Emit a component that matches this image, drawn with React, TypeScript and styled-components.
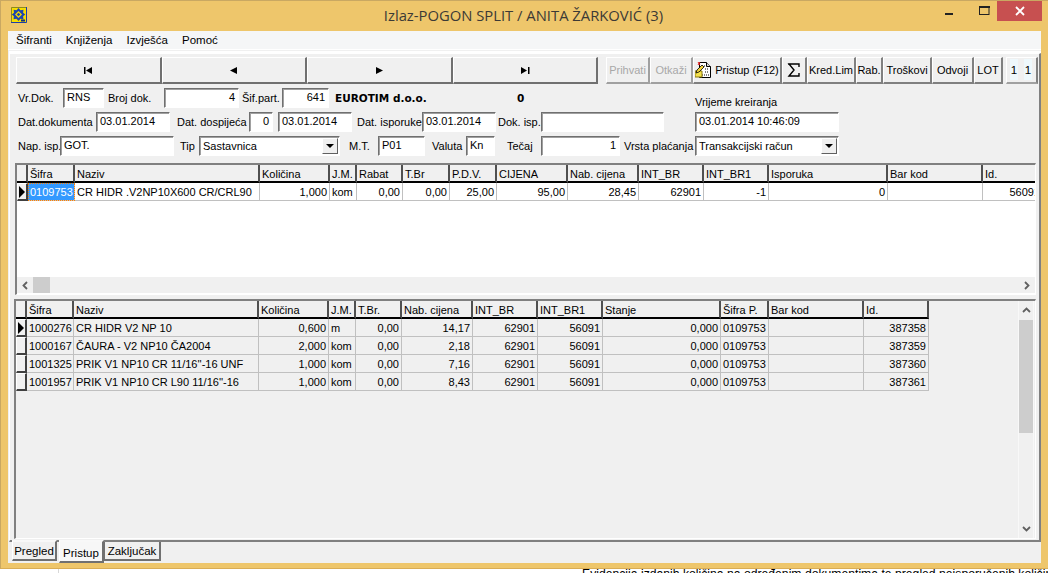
import React from 'react';
import styled, { createGlobalStyle } from 'styled-components';

const GlobalStyle = createGlobalStyle`
  html, body { margin: 0; padding: 0; background: #fff; overflow: hidden; }
  body { width: 1048px; height: 573px; font-family: "Liberation Sans", Arial, sans-serif; font-size: 11px; color: #000; }
  * { box-sizing: border-box; }
`;

const Page = styled.div`
  width: 1048px;
  height: 573px;
  position: relative;
  overflow: hidden;
  background: #fff;
`;
const BehindText = styled.div`
  position: absolute;
  left: 582px;
  top: 567px;
  font-size: 12.2px;
  white-space: nowrap;
`;
const BehindLine = styled.div`
  position: absolute;
  left: 58px;
  top: 569px;
  width: 1px;
  height: 4px;
  background: #d8d8d8;
`;
const Window = styled.div`
  width: 1048px;
  height: 569px;
  display: flex;
  flex-direction: column;
  background: #eec66b;
  border: 1px solid #d9ad55;
  border-top-color: #c9a862;
  border-left-color: #c9a862;
  border-right: 0;
  padding: 0 6px 5px 7px;
  position: relative;
`;
const TitleBar = styled.div`
  height: 30px;
  flex: none;
  display: flex;
  align-items: center;
  padding: 0 0 2px 3px;
`;
const Title = styled.div`
  flex: 1;
  text-align: center;
  font-family: "Open Sans", "Noto Sans", sans-serif;
  font-size: 14.8px;
  color: #3c3a36;
  padding-left: 94px;
`;
const WinButtons = styled.div`
  display: flex;
  align-self: flex-start;
  align-items: flex-start;
`;
const WinButton = styled.div<{ $w: number; $bg?: string }>`
  width: ${p => p.$w}px;
  height: 20px;
  background: ${p => p.$bg || 'transparent'};
  display: flex;
  align-items: center;
  justify-content: center;
`;
const Client = styled.div`
  flex: 1;
  display: flex;
  flex-direction: column;
  margin-right: 1px;
  background: #f0f0f0;
  min-height: 0;
`;
const MenuBar = styled.div`
  height: 19px;
  flex: none;
  display: flex;
  align-items: center;
  gap: 14px;
  padding-left: 8px;
  background: #f5f6f7;
  font-size: 11.5px;
  border-bottom: 1px solid #fff;
`;
const Sheet = styled.div`
  flex: 1;
  display: flex;
  flex-direction: column;
  margin: 1px 0 0 1px;
  min-height: 0;
  border-top: 2px solid #fff;
`;
const Main = styled.div`
  height: 489px;
  flex: none;
  border: 1px solid #fff;
  border-right: 2px solid #808080;
  border-bottom: 2px solid #808080;
  padding: 3px 1px 0 6px;
  display: flex;
  flex-direction: column;
`;
const ToolRow = styled.div`
  display: flex;
  height: 27px;
  flex: none;
`;
const NavButton = styled.div`
  width: 145.5px;
  height: 27px;
  background: #f0f0f0;
  border: 1px solid #fff;
  border-right: 2px solid #707070;
  border-bottom: 2px solid #707070;
  display: flex;
  align-items: center;
  justify-content: center;
`;
const ToolGroup = styled.div`
  display: flex;
  margin-left: 8px;
  flex: 1;
`;
const ToolButton = styled.div<{ $w: number; $off?: boolean }>`
  width: ${p => p.$w}px;
  height: 27px;
  flex: none;
  background: #f0f0f0;
  border: 1px solid #fff;
  border-right: 2px solid ${p => (p.$off ? '#a0a0a0' : '#808080')};
  border-bottom: 2px solid ${p => (p.$off ? '#a0a0a0' : '#808080')};
  display: flex;
  align-items: center;
  justify-content: center;
  gap: 3px;
  white-space: nowrap;
  color: ${p => (p.$off ? '#a8a8a8' : '#000')};
  font-size: 11px;
  overflow: hidden;
`;
const CounterBox = styled.div`
  flex: 1;
  height: 27px;
  display: flex;
  margin-left: 3px;
  border-left: 1px solid #fff;
  border-top: 1px solid #fff;
  border-right: 2px solid #808080;
  border-bottom: 2px solid #a0a0a0;
`;
const Counter = styled.div<{ $ml: number }>`
  width: 8px;
  height: 21px;
  margin: 1px 0 0 ${p => p.$ml}px;
  background: #eef8fc;
  display: flex;
  align-items: center;
  justify-content: center;
  font-size: 11.5px;
`;
const FormArea = styled.div`
  height: 79px;
  flex: none;
  display: flex;
  flex-direction: column;
  padding-top: 4px;
`;
const FormRow = styled.div`
  height: 24px;
  flex: none;
  display: flex;
  align-items: flex-start;
`;
const Label = styled.div<{ $ml: number; $w?: number }>`
  margin-left: ${p => p.$ml}px;
  ${p => (p.$w ? `width: ${p.$w}px;` : '')}
  flex: none;
  line-height: 20px;
  font-size: 11px;
  white-space: nowrap;
`;
const Strong = styled.div<{ $ml: number; $w: number }>`
  margin-left: ${p => p.$ml}px;
  width: ${p => p.$w}px;
  flex: none;
  line-height: 20px;
  font-family: "DejaVu Sans", sans-serif;
  font-size: 10.5px;
  font-weight: bold;
  white-space: nowrap;
`;
const Input = styled.div<{ $ml: number; $w: number; $right?: boolean }>`
  margin-left: ${p => p.$ml}px;
  width: ${p => p.$w}px;
  height: 20px;
  flex: none;
  background: #fff;
  border: 1px solid #fff;
  border-top-color: #707070;
  border-left-color: #707070;
  box-shadow: inset 1px 1px 0 #a0a0a0;
  padding: 0 3px 0 3px;
  line-height: 17px;
  font-size: 11px;
  text-align: ${p => (p.$right ? 'right' : 'left')};
  overflow: hidden;
  white-space: nowrap;
`;
const Select = styled(Input)`
  display: flex;
  align-items: center;
  justify-content: space-between;
  padding-right: 1px;
`;
const SelectArrow = styled.div`
  width: 16px;
  height: 16px;
  flex: none;
  background: #f0f0f0;
  border: 1px solid #fff;
  border-right-color: #606060;
  border-bottom-color: #606060;
  display: flex;
  align-items: center;
  justify-content: center;
`;
const TriangleDown = styled.div`
  width: 0;
  height: 0;
  border-left: 4px solid transparent;
  border-right: 4px solid transparent;
  border-top: 4px solid #000;
`;
const CreatedColumn = styled.div`
  margin-left: 31px;
  flex: none;
`;
const CreatedLabel = styled.div`
  line-height: 14px;
  margin-top: 7px;
  height: 17px;
  font-size: 11px;
`;
const GridFrame = styled.div<{ $h: number; $gray?: boolean; $ml: number; $mt?: number }>`
  height: ${p => p.$h}px;
  margin-left: ${p => p.$ml}px;
  margin-top: ${p => p.$mt || 0}px;
  width: ${p => 1020 - p.$ml}px;
  flex: none;
  border: 1px solid #fff;
  border-top: 2px solid #808080;
  border-left: 2px solid #808080;
  background: ${p => (p.$gray ? '#f0f0f0' : '#fff')};
  position: relative;
  overflow: hidden;
  display: flex;
`;
const GridBody = styled.div`
  flex: 1;
  min-width: 0;
  overflow: hidden;
`;
const Table = styled.table<{ $w: number }>`
  width: ${p => p.$w}px;
  border-collapse: separate;
  border-spacing: 0;
  table-layout: fixed;
  font-size: 11px;
`;
const Head = styled.th`
  height: 18px;
  padding: 1px 2px 0;
  font-weight: normal;
  text-align: left;
  background: #f0f0f0;
  border-right: 2px solid #505050;
  border-bottom: 2px solid #000;
  white-space: nowrap;
  overflow: hidden;
`;
const Cell = styled.td<{ $right?: boolean; $selected?: boolean; $gray?: boolean }>`
  height: 18px;
  padding: 0 2px;
  border-right: 1px solid #c0c0c0;
  border-bottom: 1px solid #c0c0c0;
  text-align: ${p => (p.$right ? 'right' : 'left')};
  white-space: nowrap;
  overflow: hidden;
  background: ${p => (p.$selected ? '#3399ff' : p.$gray ? '#f0f0f0' : '#fff')};
  color: ${p => (p.$selected ? '#fff' : '#000')};
  outline: ${p => (p.$selected ? '1px dotted #ff8000' : 'none')};
  outline-offset: -1px;
`;
const Indicator = styled.td`
  height: 18px;
  padding: 0;
  overflow: hidden;
  background: #f0f0f0;
  border-right: 2px solid #404040;
  border-bottom: 2px solid #404040;
  border-left: 1px solid #fff;
  border-top: 1px solid #fff;
`;
const IndicatorMark = styled.div`
  width: 0;
  height: 0;
  margin-left: 1px;
  border-top: 6px solid transparent;
  border-bottom: 6px solid transparent;
  border-left: 6px solid #000;
`;
const HScroll = styled.div`
  position: absolute;
  left: 0;
  right: 0;
  bottom: 1px;
  height: 16px;
  background: #f0f0f0;
  display: flex;
  align-items: center;
  justify-content: space-between;
`;
const HThumb = styled.div`
  position: absolute;
  left: 16px;
  top: 0;
  width: 17px;
  height: 16px;
  background: #cdcdcd;
`;
const ArrowBox = styled.div`
  width: 17px;
  height: 16px;
  flex: none;
  display: flex;
  align-items: center;
  justify-content: center;
`;
const VScroll = styled.div`
  width: 16px;
  flex: none;
  margin: 0 1px 0 0;
  background: #f0f0f0;
  display: flex;
  flex-direction: column;
  align-items: center;
  border-left: 1px solid #f8f8f8;
  border-right: 1px solid #f8f8f8;
`;
const VArrow = styled(ArrowBox)`
  height: 19px;
  width: 14px;
`;
const VThumb = styled.div`
  width: 100%;
  height: 113px;
  background: #cdcdcd;
  flex: none;
`;
const VTrack = styled.div`
  flex: 1;
`;
const Tabs = styled.div`
  flex: 1;
  display: flex;
  align-items: flex-start;
  padding-left: 3px;
  background: #f0f0f0;
`;
const Tab = styled.div<{ $w: number; $active?: boolean; $first?: boolean; $ml?: number }>`
  width: ${p => p.$w}px;
  height: ${p => (p.$active ? 23 : p.$first ? 21 : 19)}px;
  margin-left: ${p => p.$ml || 0}px;
  margin-top: ${p => (p.$active || p.$first ? -2 : 0)}px;
  padding-top: ${p => (p.$active ? 3 : 0)}px;
  display: flex;
  align-items: center;
  justify-content: center;
  font-size: 11.5px;
  background: ${p => (p.$active ? '#f7f7f7' : '#f0f0f0')};
  border-top: ${p => (p.$active || p.$first ? '2px solid #f8f8f8' : '0')};
  border-right: 2px solid #707070;
  border-bottom: 2px solid #707070;
  border-left: 1px solid ${p => (p.$first || p.$active ? '#fff' : '#707070')};
`;

const gridOneCols = [11, 47, 185, 70, 27, 46, 47, 47, 71, 71, 65, 65, 119, 95, 60];
const gridOneHead = ['', 'Šifra', 'Naziv', 'Količina', 'J.M.', 'Rabat', 'T.Br', 'P.D.V.', 'CIJENA', 'Nab. cijena', 'INT_BR', 'INT_BR1', 'Isporuka', 'Bar kod', 'Id.'];
const gridTwoCols = [11, 47, 185, 70, 27, 46, 71, 65, 65, 118, 48, 95, 65];
const gridTwoHead = ['', 'Šifra', 'Naziv', 'Količina', 'J.M.', 'T.Br.', 'Nab. cijena', 'INT_BR', 'INT_BR1', 'Stanje', 'Šifra P.', 'Bar kod', 'Id.'];
const items = [
  ['1000276', 'CR HIDR V2 NP 10', '0,600', 'm', '0,00', '14,17', '62901', '56091', '0,000', '0109753', '', '387358'],
  ['1000167', 'ČAURA - V2 NP10 ČA2004', '2,000', 'kom', '0,00', '2,18', '62901', '56091', '0,000', '0109753', '', '387359'],
  ['1001325', "PRIK V1 NP10 CR 11/16''-16 UNF", '1,000', 'kom', '0,00', '7,16', '62901', '56091', '0,000', '0109753', '', '387360'],
  ['1001957', "PRIK V1 NP10 CR L90 11/16''-16", '1,000', 'kom', '0,00', '8,43', '62901', '56091', '0,000', '0109753', '', '387361'],
];
const itemRight = [false, false, true, false, true, true, true, true, true, false, false, true];
const sum = (a: number[]) => a.reduce((x, y) => x + y, 0);

const Chevron = ({ d }: { d: string }) => (
  <svg width="9" height="9" viewBox="0 0 9 9"><path d={d} fill="none" stroke="#606060" strokeWidth="1.8" /></svg>
);
const NavIcon = ({ d }: { d: string }) => (
  <svg width="11" height="9" viewBox="0 0 11 9"><path d={d} fill="#000" /></svg>
);
const Logo = () => (
  <svg width="16" height="16" viewBox="0 0 16 16">
    <rect width="16" height="16" fill="#f8de00" />
    <path d="M15.5 0v15.500H0" fill="none" stroke="#1c3ea8" />
    <path d="M.5 15V.5H15" fill="none" stroke="#8a8a20" />
    <path d="M7.500 1l2 2.200 3-.4-.4 3 2.200 1.700-2.200 1.700.4 3-3-.4-2 2.200-2-2.200-3 .4.400-3L.8 7.500l2.200-1.700-.4-3 3 .4z" fill="#1c46b0" />
    <path d="M7.500 4l3.500 3.500L7.500 11 4 7.500z" fill="#f8de00" />
    <path d="M7.500 5.700l1.800 1.800-1.800 1.800-1.800-1.800z" fill="#1c46b0" />
    <rect x="10" y="12.500" width="4" height="2" fill="#12307f" />
  </svg>
);
const PristupIcon = () => (
  <svg width="17" height="18" viewBox="0 0 17 18">
    <path d="M4.500 1.500h7l4 4v11h-11z" fill="#fff" stroke="#000" />
    <path d="M11.500 1.500v4h4" fill="#d8d8d8" stroke="#000" />
    <path d="M7 5h3M10 8h4M10 11h4M7 14h7" stroke="#000" strokeDasharray="1 1" />
    <path d="M0 10h7v6H0z" fill="#f4e04a" stroke="#8a7a10" />
    <path d="M2 9l5-5 2 2-5 5-3 1z" fill="#f2d33a" stroke="#000" strokeWidth=".8" />
    <path d="M3 1l2 3M5 1L3 4" stroke="#e02020" />
  </svg>
);
const Sigma = () => (
  <svg width="14" height="14" viewBox="0 0 14 14">
    <path d="M1 1h11v3M12 1H2l5 6-5 6h10v-3" fill="none" stroke="#000" strokeWidth="1.4" />
  </svg>
);

export default function App() {
  return (
    <Page>
      <GlobalStyle />
      <BehindText>Evidencija izdanih količina na određenim dokumentima te pregled neisporučenih količina</BehindText>
      <BehindLine />
      <Window>
        <TitleBar>
          <Logo />
          <Title>Izlaz-POGON SPLIT / ANITA ŽARKOVIĆ (3)</Title>
          <WinButtons>
            <WinButton $w={45}>
              <svg width="10" height="10" viewBox="0 0 10 10"><rect x="1" y="7" width="8" height="2" fill="#222" /></svg>
            </WinButton>
            <WinButton $w={26}>
              <svg width="11" height="10" viewBox="0 0 11 10"><rect x=".5" y="1" width="9.500" height="7.500" fill="none" stroke="#222" /><rect x="0" y="0" width="11" height="2" fill="#222" /></svg>
            </WinButton>
            <WinButton $w={45} $bg="#c75050">
              <svg width="10" height="10" viewBox="0 0 10 10"><path d="M1 1l8 8M9 1l-8 8" stroke="#fff" strokeWidth="1.8" /></svg>
            </WinButton>
          </WinButtons>
        </TitleBar>
        <Client>
          <MenuBar>
            <span>Šifranti</span><span>Knjiženja</span><span>Izvješća</span><span>Pomoć</span>
          </MenuBar>
          <Sheet>
            <Main>
              <ToolRow>
                <NavButton><NavIcon d="M1 1h1.500v7H1zM3 4.500L9 1v7z" /></NavButton>
                <NavButton><NavIcon d="M2 4.500L9 1v7z" /></NavButton>
                <NavButton><NavIcon d="M9 4.500L2 1v7z" /></NavButton>
                <NavButton><NavIcon d="M9 1h1.500v7H9zM8 4.500L2 1v7z" /></NavButton>
                <ToolGroup>
                  <ToolButton $w={44} $off>Prihvati</ToolButton>
                  <ToolButton $w={43} $off>Otkaži</ToolButton>
                  <ToolButton $w={89}><PristupIcon />Pristup (F12)</ToolButton>
                  <ToolButton $w={25}><Sigma /></ToolButton>
                  <ToolButton $w={49}>Kred.Lim</ToolButton>
                  <ToolButton $w={27}>Rab.</ToolButton>
                  <ToolButton $w={49}>Troškovi</ToolButton>
                  <ToolButton $w={42}>Odvoji</ToolButton>
                  <ToolButton $w={29}>LOT</ToolButton>
                  <CounterBox>
                    <Counter $ml={3}>1</Counter>
                    <Counter $ml={6}>1</Counter>
                  </CounterBox>
                </ToolGroup>
              </ToolRow>
              <FormArea>
                <FormRow>
                  <Label $ml={2} $w={45}>Vr.Dok.</Label>
                  <Input $ml={0} $w={41}>RNS</Input>
                  <Label $ml={4} $w={56}>Broj dok.</Label>
                  <Input $ml={0} $w={75} $right>4</Input>
                  <Label $ml={3} $w={40}>Šif.part.</Label>
                  <Input $ml={0} $w={47} $right>641</Input>
                  <Strong $ml={6} $w={182}>EUROTIM d.o.o.</Strong>
                  <Strong $ml={0} $w={178}>0</Strong>
                  <CreatedLabel>Vrijeme kreiranja</CreatedLabel>
                </FormRow>
                <FormRow>
                  <Label $ml={2} $w={78}>Dat.dokumenta</Label>
                  <Input $ml={0} $w={74}>03.01.2014</Input>
                  <Label $ml={7} $w={72}>Dat. dospijeća</Label>
                  <Input $ml={0} $w={24} $right>0</Input>
                  <Input $ml={5} $w={74}>03.01.2014</Input>
                  <Label $ml={5} $w={65}>Dat. isporuke</Label>
                  <Input $ml={0} $w={74}>03.01.2014</Input>
                  <Label $ml={2} $w={43}>Dok. isp.</Label>
                  <Input $ml={0} $w={123} />
                  <CreatedColumn><Input $ml={0} $w={144}>03.01.2014 10:46:09</Input></CreatedColumn>
                </FormRow>
                <FormRow>
                  <Label $ml={2} $w={42}>Nap. isp.</Label>
                  <Input $ml={0} $w={114}>GOT.</Input>
                  <Label $ml={6} $w={19}>Tip</Label>
                  <Select $ml={0} $w={141}>Sastavnica<SelectArrow><TriangleDown /></SelectArrow></Select>
                  <Label $ml={9} $w={29}>M.T.</Label>
                  <Input $ml={0} $w={47}>P01</Input>
                  <Label $ml={7} $w={34}>Valuta</Label>
                  <Input $ml={0} $w={29}>Kn</Input>
                  <Label $ml={12} $w={34}>Tečaj</Label>
                  <Input $ml={0} $w={79} $right>1</Input>
                  <Label $ml={4} $w={71}>Vrsta plaćanja</Label>
                  <Select $ml={0} $w={144}>Transakcijski račun<SelectArrow><TriangleDown /></SelectArrow></Select>
                </FormRow>
              </FormArea>
              <GridFrame $h={132} $ml={-1}>
                <GridBody>
                  <Table $w={sum(gridOneCols)}>
                    <colgroup>{gridOneCols.map((w, i) => <col key={i} style={{ width: w }} />)}</colgroup>
                    <thead>
                      <tr>{gridOneHead.map((h, i) => <Head key={i}>{h}</Head>)}</tr>
                    </thead>
                    <tbody>
                      <tr>
                        <Indicator><IndicatorMark /></Indicator>
                        <Cell $selected>0109753</Cell>
                        <Cell>CR HIDR .V2NP10X600 CR/CRL90</Cell>
                        <Cell $right>1,000</Cell>
                        <Cell>kom</Cell>
                        <Cell $right>0,00</Cell>
                        <Cell $right>0,00</Cell>
                        <Cell $right>25,00</Cell>
                        <Cell $right>95,00</Cell>
                        <Cell $right>28,45</Cell>
                        <Cell $right>62901</Cell>
                        <Cell $right>-1</Cell>
                        <Cell $right>0</Cell>
                        <Cell />
                        <Cell $right>56091</Cell>
                      </tr>
                    </tbody>
                  </Table>
                </GridBody>
                <HScroll>
                  <ArrowBox><Chevron d="M6 1L2.500 4.500L6 8" /></ArrowBox>
                  <HThumb />
                  <ArrowBox><Chevron d="M3 1L6.500 4.500L3 8" /></ArrowBox>
                </HScroll>
              </GridFrame>
              <GridFrame $h={240} $ml={-2} $mt={4} $gray>
                <GridBody>
                  <Table $w={sum(gridTwoCols)}>
                    <colgroup>{gridTwoCols.map((w, i) => <col key={i} style={{ width: w }} />)}</colgroup>
                    <thead>
                      <tr>{gridTwoHead.map((h, i) => <Head key={i}>{h}</Head>)}</tr>
                    </thead>
                    <tbody>
                      {items.map((row, r) => (
                        <tr key={row[0]}>
                          <Indicator>{r === 0 && <IndicatorMark />}</Indicator>
                          {row.map((v, i) => <Cell key={i} $gray $right={itemRight[i]}>{v}</Cell>)}
                        </tr>
                      ))}
                    </tbody>
                  </Table>
                </GridBody>
                <VScroll>
                  <VArrow><Chevron d="M1 6L4.500 2.500L8 6" /></VArrow>
                  <VThumb />
                  <VTrack />
                  <VArrow><Chevron d="M1 3L4.500 6.500L8 3" /></VArrow>
                </VScroll>
              </GridFrame>
            </Main>
            <Tabs>
              <Tab $w={45} $first>Pregled</Tab>
              <Tab $w={45} $active $ml={2}>Pristup</Tab>
              <Tab $w={57}>Zaključak</Tab>
            </Tabs>
          </Sheet>
        </Client>
      </Window>
    </Page>
  );
}
